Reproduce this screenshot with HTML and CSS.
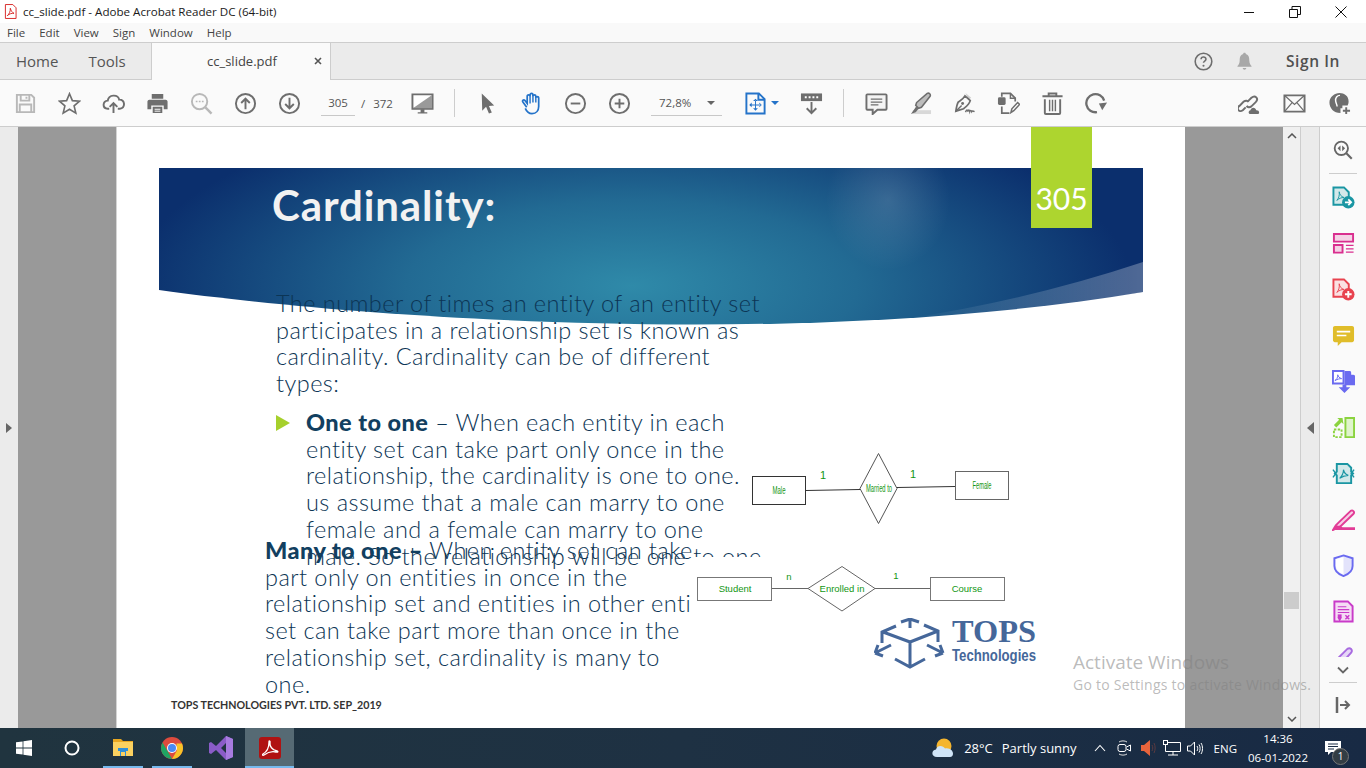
FILE: index.html
```html
<!DOCTYPE html>
<html>
<head>
  <meta charset="utf-8">
  <title>cc_slide.pdf - Adobe Acrobat Reader DC (64-bit)</title>
  <link rel="stylesheet" href="styles.css">
</head>
<body>
<div class="app">

  <!-- window title -->
  <div class="titlebar">
    <svg class="app-icon" viewBox="0 0 14 16"><path d="M1.5 .5h8l3.5 3.5v11.5h-11.5z" fill="#fff" stroke="#d6201f"/><path d="M3.5 12.5c2-1.500 3.500-4.500 3.300-8 .8 3 2 4.500 4 5.500-2.500-.3-5 .5-7.300 2.500z" fill="none" stroke="#d6201f"/></svg>
    <span class="title-text">cc_slide.pdf - Adobe Acrobat Reader DC (64-bit)</span>
    <div class="win-btns">
      <div class="win-btn"><svg width="12" height="12" viewBox="0 0 12 12"><path d="M1 6.500h10" stroke="#111"/></svg></div>
      <div class="win-btn"><svg width="12" height="12" viewBox="0 0 12 12"><path d="M.5 3.500h8v8h-8zM3 3.500v-3h8.500v8h-3" fill="none" stroke="#111"/></svg></div>
      <div class="win-btn"><svg width="12" height="12" viewBox="0 0 12 12"><path d="M.5 .5l11 11M11.500 .5l-11 11" stroke="#111"/></svg></div>
    </div>
  </div>

  <div class="menubar">
    <span>File</span><span>Edit</span><span>View</span><span>Sign</span><span>Window</span><span>Help</span>
  </div>

  <div class="tabbar">
    <div class="tab-links">
      <span>Home</span>
      <span>Tools</span>
    </div>
    <div class="doc-tab">
      <span>cc_slide.pdf</span>
      <svg class="tab-close" width="8" height="8" viewBox="0 0 8 8"><path d="M1 1l6 6M7 1l-6 6" stroke="#555" stroke-width="1.600"/></svg>
    </div>
    <div class="tab-right">
      <svg class="ico" viewBox="0 0 24 24"><circle cx="12" cy="12" r="9.500" fill="none" stroke="#6e6e6e" stroke-width="1.800"/><path d="M9.200 9.500c.2-3.500 5.800-3.300 5.600 0 0 2-2.800 2-2.800 4" fill="none" stroke="#6e6e6e" stroke-width="1.800"/><circle cx="12" cy="16.800" r="1.200" fill="#6e6e6e"/></svg>
      <svg class="ico bell" viewBox="0 0 24 24"><path d="M12 2c1 0 1.500.6 1.500 1.400 3.500 1 4 4 4 7.600 0 3 1.500 5 2.500 6v1H4v-1c1-1 2.500-3 2.500-6 0-3.600.5-6.600 4-7.600C10.500 2.600 11 2 12 2zM10 19.500h4c0 2.500-4 2.500-4 0z" fill="#a8a8a8"/></svg>
      <span class="sign-in">Sign In</span>
    </div>
  </div>

  <!-- main toolbar -->
  <div class="toolbar">
    <div class="tool"><svg class="ico" viewBox="0 0 24 24"><path d="M3 3h15l3 3v15H3z M7 3v6h9V3 M6 21v-8h12v8 M13 5v2" fill="none" stroke="#b8b8b8" stroke-width="2"/></svg></div>
    <div class="tool"><svg class="ico" viewBox="0 0 24 24"><path d="M12 1.800l3 7.200 7.500.6-5.700 4.900 1.800 7.500L12 18l-6.600 4 1.800-7.500L1.500 9.600 9 9z" fill="none" stroke="#6e6e6e" stroke-width="1.700"/></svg></div>
    <div class="tool"><svg class="ico" viewBox="0 0 24 24"><path d="M7.500 17.500H6c-6-.5-5.500-8 0-8.500 1-6.500 10.500-7 12-1 6-.5 7 8.500.5 9.500H16.500" fill="none" stroke="#6e6e6e" stroke-width="2"/><path d="M12 22v-10M8 15.500l4-4 4 4" fill="none" stroke="#6e6e6e" stroke-width="2"/></svg></div>
    <div class="tool"><svg class="ico" viewBox="0 0 24 24"><path d="M6 2h12v5H6zM3.500 8h17c1 0 2 1 2 2v8h-4v-4h-13v4h-4v-8c0-1 1-2 2-2zM7 15.500h10V22H7z" fill="#6e6e6e"/><path d="M9 18h6M9 20h6" stroke="#fff"/></svg></div>
    <div class="tool"><svg class="ico" viewBox="0 0 24 24"><circle cx="10" cy="10" r="8" fill="none" stroke="#b8b8b8" stroke-width="2"/><path d="M16 16l6.500 6.500" stroke="#b8b8b8" stroke-width="2.500"/><path d="M6 10h1.800M9.200 10H11M12.400 10h1.800" stroke="#b8b8b8" stroke-width="1.600"/></svg></div>
    <div class="tool"><svg class="ico" viewBox="0 0 24 24"><circle cx="12" cy="12" r="10" fill="none" stroke="#6e6e6e" stroke-width="2"/><path d="M12 18V7M7.500 11.500L12 7l4.500 4.500" fill="none" stroke="#6e6e6e" stroke-width="2"/></svg></div>
    <div class="tool"><svg class="ico" viewBox="0 0 24 24"><circle cx="12" cy="12" r="10" fill="none" stroke="#6e6e6e" stroke-width="2"/><path d="M12 6v11M7.500 12.500L12 17l4.500-4.500" fill="none" stroke="#6e6e6e" stroke-width="2"/></svg></div>
    <div class="page-nav"><span class="page-input">305</span><span class="page-slash">/</span><span>372</span></div>
    <div class="tool"><svg class="ico" viewBox="0 0 24 24"><path d="M1.500 2.500h21v15h-21z" fill="#fff" stroke="#6e6e6e" stroke-width="2"/><path d="M2 17L22 3v14z" fill="#9a9a9a"/><path d="M7 21h10v1.500H7zM10 18h4v3h-4z" fill="#6e6e6e"/></svg></div>
    <div class="sep first-sep"></div>
    <div class="tool"><svg class="ico" viewBox="0 0 24 24"><path d="M6 1.500l13 12.500-5.500.5 3 7-3 1-3-7L6.500 19.500z" fill="#6e6e6e"/></svg></div>
    <div class="tool"><svg class="ico" viewBox="0 0 24 24"><path d="M7 16L3 10.500c-1.200-1.500.8-3 2-1.800L7.500 12V4.500c0-2 3-2 3 0V3c0-2 3-2 3 0v1.500c0-2 3-2 3 0V6c0-1.500 3-1.500 3 0v9c0 4-2.500 7.500-7 7.500-4 0-5.500-2-7-5.500" fill="none" stroke="#2473c9" stroke-width="1.800"/><path d="M10.500 4v8M13.500 3v8M16.500 4.500V11" stroke="#2473c9" stroke-width="1.500"/></svg></div>
    <div class="tool"><svg class="ico" viewBox="0 0 24 24"><circle cx="12" cy="12" r="10" fill="none" stroke="#6e6e6e" stroke-width="2"/><path d="M7 12h10" stroke="#6e6e6e" stroke-width="2"/></svg></div>
    <div class="tool"><svg class="ico" viewBox="0 0 24 24"><circle cx="12" cy="12" r="10" fill="none" stroke="#6e6e6e" stroke-width="2"/><path d="M7 12h10M12 7v10" stroke="#6e6e6e" stroke-width="2"/></svg></div>
    <div class="zoom-box"><span>72,8%</span><i class="caret"></i></div>
    <div class="tool fit-tool">
      <svg class="ico" viewBox="0 0 24 24"><path d="M2.500 1.500h13l6 6v15h-19z M15 1.500v6.500h6.500" fill="none" stroke="#2473c9" stroke-width="2"/><path d="M12 7l-2.500 2.500h5zM12 19.500L9.500 17h5zM5.500 13.500L8 11v5zM18.500 13.500L16 11v5zM11.500 9h1v9h-1zM7 13h10v1H7z" fill="#2473c9"/></svg>
      <i class="caret blue"></i>
    </div>
    <div class="tool"><svg class="ico" viewBox="0 0 24 24"><path d="M1 1.500h22v8H1z" fill="#6e6e6e"/><path d="M5 5.500h2M9 5.500h2M13 5.500h2M17 5.500h2" stroke="#fff" stroke-width="2"/><path d="M12 10.500v11M7 17l5 5 5-5" fill="none" stroke="#6e6e6e" stroke-width="2"/></svg></div>
    <div class="sep second-sep"></div>
    <div class="tool"><svg class="ico" viewBox="0 0 24 24"><path d="M2.500 2.500h19c.5 0 1 .5 1 1v14c0 .5-.5 1-1 1H13l-5 4.500v-4.500H2.500c-.5 0-1-.5-1-1v-14c0-.5.500-1 1-1z" fill="#f4f4f4" stroke="#6e6e6e" stroke-width="2"/><path d="M6 7.500h12M6 10.500h12M6 13.500h8" stroke="#6e6e6e" stroke-width="1.300"/></svg></div>
    <div class="tool"><svg class="ico" viewBox="0 0 24 24"><path d="M4 19h19v4H4z" fill="#d8d8d8"/><path d="M8 11L19 1.500c2-1 4 1 3 3L13 16l-3 1-3-3z" fill="#bdbdbd" stroke="#6e6e6e" stroke-width="1.600"/><path d="M7.500 15l2.500 2.500L7 21l-5 2z" fill="#6e6e6e"/></svg></div>
    <div class="tool"><svg class="ico" viewBox="0 0 24 24"><path d="M13 1l6 5-3 2z" fill="#cfcfcf"/><path d="M12.500 4l5.500 5c-1 4-4 6-7 8.500L3 20c.5-3.500 1-7 2.500-9.500 2-1.500 5-3 7-6.500z" fill="none" stroke="#6e6e6e" stroke-width="1.800"/><path d="M3 20l6-6" stroke="#6e6e6e" stroke-width="1.500"/><circle cx="10" cy="12" r="1.500" fill="#6e6e6e"/><path d="M13 21c1.500-3 2-2.500 2.500-.5.500-2.500 1.500-2.500 2 0 .5-1.500 1.500-1.500 2 0 .5-1 1-1 3 0" fill="none" stroke="#6e6e6e" stroke-width="1.500"/></svg></div>
    <div class="tool"><svg class="ico" viewBox="0 0 24 24"><path d="M5 5V1.500h9l5 5V10M5 15v7h8" fill="none" stroke="#6e6e6e" stroke-width="1.800"/><rect x="1" y="5.500" width="8" height="8" rx="1.500" fill="#6e6e6e"/><path d="M14 1.500v5h5" fill="none" stroke="#6e6e6e" stroke-width="1.500"/><path d="M14.500 21.500l1-4 6-6.500 2 2-6 6.500z" fill="#fff" stroke="#6e6e6e" stroke-width="1.600"/></svg></div>
    <div class="tool"><svg class="ico" viewBox="0 0 24 24"><path d="M1.500 4.500h21M8 4.500V1.500h8v3M4 7.500V22c0 .5.500 1 1 1h14c.5 0 1-.5 1-1V7.500" fill="none" stroke="#6e6e6e" stroke-width="2"/><path d="M9 8v12M12 8v12M15 8v12" stroke="#6e6e6e" stroke-width="1.500"/></svg></div>
    <div class="tool"><svg class="ico" viewBox="0 0 24 24"><path d="M12.500 21A9.500 9.500 0 1 1 20 9" fill="none" stroke="#6e6e6e" stroke-width="2.400"/><path d="M23 11l-5 8-3.500-7z" fill="#6e6e6e"/></svg></div>
    <div class="tool-right">
      <div class="tool"><svg class="ico" viewBox="0 0 24 24"><path d="M8 16L5 19c-4 3-7-2-3.500-4.500L6 10c2-1.500 4-1 5 .5M11 9l3-3c4-3.500 8 1 4.500 4.500L14 15c-2 1.500-4 1-5-.5" fill="none" stroke="#6e6e6e" stroke-width="2"/><path d="M13 23c-2.500 0-2.500-3.500 0-4 .5-3.500 5.500-3.500 6 0 3.500-.5 4 4 1.500 4z" fill="#6e6e6e"/></svg></div>
      <div class="tool"><svg class="ico" viewBox="0 0 24 24"><path d="M1.500 3.500h21v17h-21z" fill="none" stroke="#6e6e6e" stroke-width="2"/><path d="M2 4l10 9 10-9M2 20l7.500-9M22 20l-7.500-9" fill="none" stroke="#6e6e6e" stroke-width="1.300"/></svg></div>
      <div class="tool"><svg class="ico" viewBox="0 0 24 24"><path d="M12 1c5 0 9.500 3 9.500 9 0 2-.5 3-1 4h-5.500v3h-2v5c-7 0-11.500-5-11.500-11S7 1 12 1z" fill="#6e6e6e"/><path d="M12.500 3.500c-3 0-5 2.500-4.500 6 .3 2 1.500 4 1.500 5.500" fill="none" stroke="#fff" stroke-width="1.500"/><path d="M19 16v7M15.500 19.500h7.500" stroke="#6e6e6e" stroke-width="2"/></svg></div>
    </div>
  </div>

  <div class="main">
    <div class="side-pane"><i class="arrow-right"></i></div>

    <div class="viewer">
      <div class="pdf-page">

        <!-- slide banner -->
        <svg class="banner" width="984" height="160" viewBox="0 0 984 160">
          <defs>
            <radialGradient id="bannerGrad" gradientUnits="userSpaceOnUse" cx="0" cy="0" r="1" gradientTransform="translate(473 118) scale(500 190)">
              <stop offset="0" stop-color="#2f8aa9"/>
              <stop offset=".45" stop-color="#226a93"/>
              <stop offset="1" stop-color="#0b2f6d"/>
            </radialGradient>
            <radialGradient id="spot">
              <stop offset="0" stop-color="#fff" stop-opacity=".14"/>
              <stop offset="1" stop-color="#fff" stop-opacity="0"/>
            </radialGradient>
            <linearGradient id="swoosh" x1="0" x2="1" y1="0" y2="0">
              <stop offset="0" stop-color="#fff" stop-opacity="0"/>
              <stop offset="1" stop-color="#fff" stop-opacity=".28"/>
            </linearGradient>
          </defs>
          <path d="M0 0H984V124C640 182 200 150 0 122Z" fill="url(#bannerGrad)"/>
          <ellipse cx="729" cy="32" rx="62" ry="70" fill="url(#spot)"/>
          <path d="M984 94Q870 132 745 151 880 145 984 124Z" fill="url(#swoosh)"/>
        </svg>

        <div class="slide-badge">305</div>
        <h1 class="slide-title">Cardinality:</h1>

        <div class="slide-text intro">
          <div>The number of times an entity of an entity set</div>
          <div>participates in a relationship set is known as</div>
          <div>cardinality. Cardinality can be of different</div>
          <div>types:</div>
        </div>

        <div class="slide-text one-one">
          <svg class="bullet" width="14" height="16" viewBox="0 0 14 16"><path d="M0 0l14 8L0 16z" fill="#a6d02c"/></svg>
          <div><b>One to one</b> – When each entity in each</div>
          <div>entity set can take part only once in the</div>
          <div>relationship, the cardinality is one to one.</div>
          <div>us assume that a male can marry to one</div>
          <div>female and a female can marry to one</div>
          <div>male. So the relationship will be one to one</div>
        </div>

        <!-- diagram 1 -->
        <svg class="diagram first" width="258" height="76" viewBox="0 0 258 76">
          <rect width="258" height="76" fill="#fff"/>
          <rect x=".5" y="26.500" width="53" height="28" fill="#fff" stroke="#333"/>
          <rect x="203.500" y="21.500" width="53" height="28" fill="#fff" stroke="#666"/>
          <path d="M54 40.500l54-1M145 37.500l58-1" stroke="#333"/>
          <path d="M126.500 3.500L145 38.500 126.500 73.500 108 38.500z" fill="#fff" stroke="#555"/>
          <g class="dia-text narrow">
            <text x="27" y="44" text-anchor="middle" textLength="13" lengthAdjust="spacingAndGlyphs">Male</text>
            <text x="127" y="42" text-anchor="middle" textLength="26" lengthAdjust="spacingAndGlyphs">Married to</text>
            <text x="230" y="39" text-anchor="middle" textLength="19" lengthAdjust="spacingAndGlyphs">Female</text>
            <text x="71" y="29" text-anchor="middle">1</text>
            <text x="161" y="28" text-anchor="middle">1</text>
          </g>
        </svg>

        <!-- diagram 2 -->
        <svg class="diagram second" width="320" height="58" viewBox="0 0 320 58">
          <rect width="320" height="58" fill="#fff"/>
          <rect x="2.500" y="20.500" width="74" height="23" fill="#fff" stroke="#777"/>
          <rect x="235.500" y="20.500" width="74" height="23" fill="#fff" stroke="#777"/>
          <path d="M77 31.500h36M180 31.500h55" stroke="#666"/>
          <path d="M147 9.500L180 31.500 147 54 113 31.500z" fill="#fff" stroke="#666"/>
          <g class="dia-text">
            <text x="40" y="35" text-anchor="middle">Student</text>
            <text x="147" y="35" text-anchor="middle">Enrolled in</text>
            <text x="272" y="35" text-anchor="middle">Course</text>
            <text x="94" y="23" text-anchor="middle">n</text>
            <text x="201" y="22" text-anchor="middle">1</text>
          </g>
        </svg>

        <div class="slide-text many-one">
          <div><b>Many to one</b> <b class="dash">–</b> When entity set can take</div>
          <div>part only on entities in once in the</div>
          <div>relationship set and entities in other enti</div>
          <div>set can take part more than once in the</div>
          <div>relationship set, cardinality is many to</div>
          <div>one.</div>
        </div>

        <!-- company logo -->
        <svg class="logo" width="190" height="52" viewBox="0 0 190 52">
          <g fill="none" stroke="#45679a" stroke-width="3">
            <path d="M36 24L9 14M36 24l28-11M36 24v25M8 25V14l14-6M64 24V13l-14-6M27 4l9-3 9 3M36 1v9M1 35l16-8M1 35l8 3M1 35l3-8M69 35L53 27M69 35l-8 3M69 35l-3-8M21 41l15 8 15-8"/>
          </g>
          <text class="logo-tops" x="78" y="24" textLength="84" lengthAdjust="spacingAndGlyphs">TOPS</text>
          <text class="logo-tech" x="78" y="43" textLength="84" lengthAdjust="spacingAndGlyphs">Technologies</text>
        </svg>

        <div class="slide-footer">TOPS TECHNOLOGIES PVT. LTD. SEP_2019</div>
      </div>
    </div>

    <div class="scrollbar">
      <svg width="10" height="6" viewBox="0 0 10 6"><path d="M1 5l4-4 4 4" fill="none" stroke="#555" stroke-width="1.500"/></svg>
      <div class="scroll-track"><div class="scroll-thumb"></div></div>
      <svg width="10" height="6" viewBox="0 0 10 6"><path d="M1 1l4 4 4-4" fill="none" stroke="#555" stroke-width="1.500"/></svg>
    </div>
    <div class="side-pane right-handle"><i class="arrow-left"></i></div>

    <!-- right tools panel -->
    <div class="tools-panel">
      <div class="panel-search">
        <svg class="ico" viewBox="0 0 24 24"><circle cx="10" cy="10" r="8" fill="none" stroke="#666" stroke-width="2.200"/><path d="M16 16l6.500 6.500" stroke="#666" stroke-width="2.600"/><path d="M9 6.500L5.500 10 9 13.500zM11 6.500l3.500 3.500-3.500 3.500z" fill="#666"/></svg>
      </div>
      <div class="panel-list">
        <div class="panel-item"><svg class="ico" viewBox="0 0 24 24"><path d="M1.500 1.500h11l5 5v13h-16z" fill="#d3e9ea" stroke="#1a96a3" stroke-width="2"/><path d="M5 15c2-2 3-5 2.500-9 .5 3 2 5 5 6-3 0-5 1-7.500 3z" fill="none" stroke="#1a96a3"/><circle cx="17" cy="17" r="6.500" fill="#1a96a3"/><path d="M13.500 17h6M17 14l3 3-3 3" fill="none" stroke="#fff" stroke-width="1.800"/></svg></div>
        <div class="panel-item"><svg class="ico" viewBox="0 0 24 24"><path d="M2 2h20v8H2z" fill="#f4d3e6" stroke="#d92f8f" stroke-width="2"/><path d="M2 13.500h9v8H2z" fill="#f4d3e6" stroke="#d92f8f" stroke-width="2"/><path d="M14.500 14h8M14.500 17.500h8M14.500 21h8" stroke="#d92f8f" stroke-width="1.300"/></svg></div>
        <div class="panel-item"><svg class="ico" viewBox="0 0 24 24"><path d="M1.500 1.500h11l5 5v13h-16z" fill="#fbe0e2" stroke="#e8434f" stroke-width="2"/><path d="M5 15c2-2 3-5 2.500-9 .5 3 2 5 5 6-3 0-5 1-7.500 3z" fill="none" stroke="#e8434f"/><circle cx="17" cy="17" r="6.500" fill="#e8434f"/><path d="M13.500 17h7M17 13.500v7" stroke="#fff" stroke-width="2"/></svg></div>
        <div class="panel-item"><svg class="ico" viewBox="0 0 24 24"><path d="M3 2h18c1 0 2 1 2 2v13c0 1-1 2-2 2H10l-4 4v-4H3c-1 0-2-1-2-2V4c0-1 1-2 2-2z" fill="#e0bd2a"/><path d="M5 8h14M5 12h10" stroke="#fff" stroke-width="1.800"/></svg></div>
        <div class="panel-item"><svg class="ico" viewBox="0 0 24 24"><path d="M1 1h11v13H1z" fill="#fff" stroke="#6a6af0" stroke-width="2"/><path d="M3 11c2-1 3-3 3-6 .5 2 1.500 3 4 4-2 0-4 .5-7 2z" fill="none" stroke="#6a6af0"/><path d="M13 1h6l5 5v10H13z" fill="#6a6af0"/><path d="M20 1l4 4h-4z" fill="#fff"/><path d="M11 15v3H7l6 6 6-6h-4v-3z" fill="#6a6af0"/></svg></div>
        <div class="panel-item"><svg class="ico" viewBox="0 0 24 24"><path d="M14 2h9v20h-9z" fill="#dff4cc" stroke="#8bd33f" stroke-width="2"/><path d="M2 14h8v8H2z" fill="none" stroke="#8bd33f" stroke-width="2" stroke-dasharray="2.500 1.500"/><path d="M11 2H5.500L7.500 4 2 9.500 4.500 12 10 6.500 12 8.500z" fill="#8bd33f"/></svg></div>
        <div class="panel-item"><svg class="ico" viewBox="0 0 24 24"><path d="M5 2h11l4 4v4l2 2-2 2v8H5v-8l-2-2 2-2z" fill="#d3e9ea" stroke="#1a96a3" stroke-width="2"/><path d="M8 17c2-2 4-5 4-9 .5 3 2 5 5 6-3 0-6 1-9 3z" fill="none" stroke="#1a96a3" stroke-width="1.200"/><path d="M1 8l3 4-3 4M23 8l-3 4 3 4" fill="none" stroke="#1a96a3" stroke-width="1.500"/></svg></div>
        <div class="panel-item"><svg class="ico" viewBox="0 0 24 24"><path d="M1 23l3-5 2-2L19.500 3c2-1.500 4.500 1 3 3L9 19z" fill="#f7cfe6" stroke="#e23c96" stroke-width="2"/><path d="M1 23l3-5 5 1 2 1h13v3z" fill="#e23c96"/></svg></div>
        <div class="panel-item"><svg class="ico" viewBox="0 0 24 24"><path d="M12 1.500l9.500 3v8c0 5-4 8.500-9.500 10.500-5.500-2-9.500-5.500-9.500-10.500v-8z" fill="#e3e3fb" stroke="#6a6af0" stroke-width="2"/><path d="M12 3v18.500c-4.500-2-8-5-8-9.500V5.500z" fill="#fff"/></svg></div>
        <div class="panel-item"><svg class="ico" viewBox="0 0 24 24"><path d="M2.500 1.500h14l5 5v16h-19z" fill="#f5dbf5" stroke="#c93bc9" stroke-width="2"/><path d="M6 7h9M6 10h12M6 13h12" stroke="#c93bc9" stroke-width="1.200"/><rect x="6" y="15" width="4" height="4" fill="#c93bc9"/><path d="M7 19h2l-1 2zM14 16l4 4M18 16l-4 4" stroke="#c93bc9" stroke-width="1.500"/></svg></div>
        <div class="panel-item"><svg class="ico" viewBox="0 0 24 24"><path d="M2 20l2-5 12-12c3-2 6 1 4 4L9 19z" fill="#e6d6f7" stroke="#a86be0" stroke-width="2"/></svg></div>
      </div>
      <svg class="panel-more" width="12" height="8" viewBox="0 0 12 8"><path d="M1 1.500l5 5 5-5" fill="none" stroke="#666" stroke-width="1.800"/></svg>
      <div class="panel-exit">
        <svg width="16" height="16" viewBox="0 0 16 16"><path d="M2 0v16" stroke="#666" stroke-width="2.500"/><path d="M5 8h9M10 4l4 4-4 4" fill="none" stroke="#666" stroke-width="2"/></svg>
      </div>
    </div>

    <div class="activate">
      <div class="activate-big">Activate Windows</div>
      <div class="activate-small">Go to Settings to activate Windows.</div>
    </div>
  </div>

  <!-- windows taskbar -->
  <div class="taskbar">
    <div class="task-btn small"><svg width="16" height="16" viewBox="0 0 16 16"><path d="M0 2.300l6.600-.9v6.200H0zM7.400 1.300L16 0v7.600H7.400zM0 8.400h6.600v6.200L0 13.700zM7.400 8.400H16V16l-8.600-1.300z" fill="#fff"/></svg></div>
    <div class="task-btn small"><svg width="16" height="16" viewBox="0 0 16 16"><circle cx="8" cy="8" r="6.500" fill="none" stroke="#fff" stroke-width="2"/></svg></div>
    <div class="task-btn open first-app"><svg width="22" height="20" viewBox="0 0 22 20"><path d="M1 1h8l2 2h10v15H1z" fill="#e8a721"/><path d="M1 4h20v14H1z" fill="#fad160"/><path d="M8 12h6v6H8zM6 10h10v3H6z" fill="#2f8fd8"/><path d="M9 14h4v4H9z" fill="#fad160"/></svg></div>
    <div class="task-btn open"><svg width="22" height="22" viewBox="0 0 22 22"><circle cx="11" cy="11" r="11" fill="#dd4b3e"/><path d="M11 22A11 11 0 0 1 1.500 5.500L6.500 14 11 22z" fill="#1fa463"/><path d="M22 11a11 11 0 0 1-11 11l5-8.500-.5-7H21c.6 1.400 1 3 1 4.500z" fill="#f7c328"/><circle cx="11" cy="11" r="5" fill="#fff"/><circle cx="11" cy="11" r="4" fill="#4a8af4"/></svg></div>
    <div class="task-btn"><svg width="24" height="24" viewBox="0 0 24 24"><path d="M17 0l7 3v18l-7 3-10-10-5 4-2-1V7l2-1 5 4zM17 7l-5 5 5 5z" fill="#8a5cc8"/><path d="M17 0l7 3v18l-7 3z" fill="#a77be0"/></svg></div>
    <div class="task-btn open active"><svg width="22" height="22" viewBox="0 0 22 22"><rect width="22" height="22" rx="3" fill="#b01212"/><path d="M4 17c3.500-2 6-6.500 6-12 0-2 1.500-1 1 1-.5 3 2 7 7 8 1.500 .3 1 1.500-1 1-4-1-8 0-12 3-1 .7-2 0-1-1z" fill="none" stroke="#fff" stroke-width="1.300"/></svg></div>

    <div class="tray">
      <svg class="weather" width="22" height="20" viewBox="0 0 22 20"><circle cx="12" cy="8" r="7.500" fill="#f5b52e"/><path d="M5 19c-6 0-6-7-1-7.500C5 7 11 7 13 10.500c5-1 8 2.500 8 5 0 2-1 3.500-3 3.500z" fill="#cfe4f7"/></svg>
      <span class="tray-temp">28°C</span>
      <span class="tray-cond">Partly sunny</span>
      <svg class="tray-chevron" width="12" height="8" viewBox="0 0 12 8"><path d="M1 7l5-5.500L11 7" fill="none" stroke="#fff" stroke-width="1.100"/></svg>
      <svg class="tray-meet" width="14" height="16" viewBox="0 0 14 16"><path d="M2 2c2-1.500 6-1.500 8 0M2 14c2 1.500 6 1.500 8 0" fill="none" stroke="#ddd"/><rect x="1" y="4.500" width="8" height="7" rx="2" fill="none" stroke="#fff"/><path d="M9.500 7l4-2v6l-4-2" fill="none" stroke="#fff"/></svg>
      <svg class="tray-speaker" width="16" height="16" viewBox="0 0 16 16"><path d="M0 5h3l6-5v16l-6-5H0z" fill="#e8643c"/><path d="M11 5c1 2 1 4 0 6M13 3c1.500 3 1.500 7 0 10" fill="none" stroke="#5a3a40"/></svg>
      <svg class="tray-net" width="18" height="16" viewBox="0 0 18 16"><path d="M2.500 2.500h15v9h-15zM10 11.500V15M5 15h10" fill="none" stroke="#fff"/><rect x=".5" y=".5" width="4" height="4" fill="#1b2c44" stroke="#fff"/></svg>
      <svg class="tray-vol" width="17" height="15" viewBox="0 0 17 15"><path d="M.5 5h3l4-4v13l-4-4h-3z" fill="none" stroke="#fff"/><path d="M10 5c1 1.500 1 3.500 0 5M12 3.500c1.500 2.500 1.500 5.500 0 8M14 2c2 3 2 8 0 11" fill="none" stroke="#fff"/></svg>
      <span class="tray-lang">ENG</span>
      <div class="clock"><div>14:36</div><div>06-01-2022</div></div>
      <div class="notify">
        <svg width="16" height="14" viewBox="0 0 16 14"><path d="M0 0h16v11H6l-3 3v-3H0z" fill="#fff"/><path d="M3 3h10M3 5.500h10M3 8h6" stroke="#1b2c44"/></svg>
        <span class="notify-count">1</span>
      </div>
    </div>
  </div>
</div>
</body>
</html>
```

FILE: styles.css
```css
html, body {
  margin: 0;
  padding: 0;
  height: 100%;
  overflow: hidden;
}
.app {
  position: relative;
  width: 1366px;
  height: 768px;
  display: flex;
  flex-direction: column;
  font-family: "Open Sans", sans-serif;
  color: #444;
  overflow: hidden;
}
.ico {
  width: 24px;
  height: 24px;
  display: block;
}

/* title + menu */
.titlebar {
  height: 23px;
  background: #fff;
  display: flex;
  align-items: center;
  font-family: "Open Sans", sans-serif;
  font-size: 11.600px;
  color: #1a1a1a;
  flex: none;
}
.app-icon {
  width: 13px;
  height: 15px;
  margin: 0 6px 0 4px;
}
.win-btns {
  margin-left: auto;
  margin-right: 2px;
  display: flex;
}
.win-btn {
  width: 46px;
  display: flex;
  justify-content: center;
}
.menubar {
  height: 20px;
  background: #f9f9f9;
  display: flex;
  align-items: center;
  gap: 14px;
  padding-left: 7px;
  font-size: 11.500px;
  color: #444;
  border-bottom: 1px solid #cdcdcd;
  box-sizing: border-box;
  flex: none;
}

/* tabs */
.tabbar {
  height: 37px;
  background: #ebebeb;
  display: flex;
  align-items: center;
  font-size: 15px;
  color: #555;
  border-bottom: 1px solid #cdcdcd;
  box-sizing: border-box;
  flex: none;
}
.tab-links {
  width: 151px;
  padding-left: 16px;
  box-sizing: border-box;
  display: flex;
  gap: 30px;
  flex: none;
}
.doc-tab {
  width: 180px;
  height: 37px;
  background: #fafafa;
  border-left: 1px solid #cdcdcd;
  border-right: 1px solid #cdcdcd;
  box-sizing: border-box;
  display: flex;
  align-items: center;
  padding-left: 55px;
  font-size: 13px;
  color: #444;
  flex: none;
}
.tab-close {
  margin-left: auto;
  margin-right: 8px;
}
.tab-right {
  margin-left: auto;
  display: flex;
  align-items: center;
  padding-right: 26px;
}
.tab-right .ico {
  width: 21px;
  height: 21px;
}
.bell {
  margin-left: 20px;
}
.sign-in {
  margin-left: 31px;
  font-weight: 600;
  font-size: 15.500px;
  letter-spacing: .6px;
  color: #505050;
}

/* toolbar */
.toolbar {
  height: 47px;
  background: #fafafa;
  display: flex;
  align-items: center;
  padding-left: 3px;
  border-bottom: 1px solid #cdcdcd;
  box-sizing: border-box;
  flex: none;
}
.tool {
  width: 44px;
  height: 44px;
  display: flex;
  align-items: center;
  justify-content: center;
  flex: none;
}
.tool .ico {
  width: 23px;
  height: 23px;
}
.page-nav {
  width: 89px;
  display: flex;
  align-items: center;
  font-size: 11.500px;
  color: #555;
  flex: none;
}
.page-input {
  width: 34px;
  margin-left: 10px;
  height: 25px;
  line-height: 25px;
  text-align: center;
  border-bottom: 1px solid #c8c8c8;
}
.page-slash {
  margin: 0 8px 0 6px;
}
.sep {
  width: 1px;
  height: 28px;
  background: #cdcdcd;
  flex: none;
}
.first-sep,
.second-sep {
  margin: 0 10px;
}
.zoom-box {
  width: 71px;
  height: 25px;
  margin: 0 11px 0 10px;
  border-bottom: 1px solid #c8c8c8;
  display: flex;
  align-items: center;
  padding-left: 8px;
  box-sizing: border-box;
  font-size: 11.500px;
  color: #555;
  flex: none;
}
.caret {
  display: inline-block;
  margin-left: auto;
  margin-right: 7px;
  border-left: 4px solid transparent;
  border-right: 4px solid transparent;
  border-top: 4px solid #666;
}
.caret.blue {
  margin: 0 0 0 4px;
  border-top-color: #2473c9;
}
.fit-tool {
  justify-content: flex-start;
  padding-left: 11px;
  box-sizing: border-box;
  margin-right: 12px;
}
.fit-tool .ico {
  flex: none;
}
.tool-right {
  margin-left: auto;
  display: flex;
  margin-right: 5px;
  gap: 1px;
}

/* main area */
.main {
  position: relative;
  flex: 1;
  display: flex;
  min-height: 0;
}
.side-pane {
  width: 18px;
  background: #ebebeb;
  display: flex;
  align-items: center;
  justify-content: center;
  flex: none;
}
.arrow-right {
  border-top: 5px solid transparent;
  border-bottom: 5px solid transparent;
  border-left: 6px solid #666;
}
.arrow-left {
  border-top: 6px solid transparent;
  border-bottom: 6px solid transparent;
  border-right: 7px solid #666;
}
.viewer {
  flex: 1;
  background: #999;
  padding-left: 98px;
  min-width: 0;
}
.pdf-page {
  position: relative;
  width: 1069px;
  height: 100%;
  background: #fff;
  border-left: 1px solid #d4d4d4;
  box-sizing: border-box;
  overflow: hidden;
}
.banner {
  position: absolute;
  left: 42px;
  top: 41px;
}
.slide-badge {
  position: absolute;
  left: 914px;
  top: 0;
  width: 61px;
  height: 101px;
  background: #add52f;
  color: #fff;
  font-family: "Lato", sans-serif;
  font-size: 30px;
  line-height: 142px;
  text-align: center;
}
.slide-title {
  position: absolute;
  left: 155px;
  top: 53px;
  margin: 0;
  font-family: "Lato", sans-serif;
  font-size: 42px;
  line-height: 50px;
  font-weight: 700;
  letter-spacing: .9px;
  color: #f2f2f2;
  white-space: nowrap;
}
.slide-text {
  position: absolute;
  font-family: "Lato", sans-serif;
  font-size: 23.500px;
  font-weight: 300;
  letter-spacing: .45px;
  line-height: 26.700px;
  color: #0c3555;
  white-space: nowrap;
}
.slide-text b {
  color: #123f60;
  font-weight: 900;
}
.intro {
  left: 159px;
  top: 163px;
}
.one-one {
  left: 189px;
  top: 282px;
}
.bullet {
  position: absolute;
  left: -30px;
  top: 6px;
}
.many-one {
  left: 148px;
  top: 410px;
}
.diagram {
  position: absolute;
}
.diagram.first {
  left: 635px;
  top: 323px;
}
.diagram.second {
  left: 578px;
  top: 430px;
}
.dia-text {
  font-family: "Liberation Sans", sans-serif;
  font-size: 9.500px;
  fill: #129612;
}
.dia-text.narrow {
  font-size: 11px;
}
.logo {
  position: absolute;
  left: 757px;
  top: 491px;
}
.logo-tops {
  font-family: "Liberation Serif", serif;
  font-weight: 700;
  font-size: 32px;
  fill: #45679a;
}
.logo-tech {
  font-family: "Liberation Sans", sans-serif;
  font-weight: 700;
  font-size: 17px;
  fill: #45679a;
}
.slide-footer {
  position: absolute;
  left: 54px;
  top: 571px;
  font-family: "Lato", sans-serif;
  font-size: 10.700px;
  font-weight: 700;
  color: #333;
  white-space: nowrap;
}

/* scrollbar + right panel */
.scrollbar {
  width: 17px;
  background: #f0f0f0;
  border-right: 1px solid #cdcdcd;
  box-sizing: content-box;
  display: flex;
  flex-direction: column;
  align-items: center;
  padding: 6px 0;
  flex: none;
}
.scroll-track {
  flex: 1;
  width: 100%;
  position: relative;
}
.scroll-thumb {
  position: absolute;
  left: 1px;
  top: 453px;
  width: 15px;
  height: 17px;
  background: #ccc;
}
.right-handle {
  border-right: 1px solid #cdcdcd;
}
.tools-panel {
  width: 46px;
  background: #fafafa;
  display: flex;
  flex-direction: column;
  align-items: center;
  flex: none;
}
.panel-search {
  height: 46px;
  width: 28px;
  display: flex;
  align-items: center;
  justify-content: center;
  border-bottom: 1px solid #cdcdcd;
  flex: none;
}
.panel-search .ico {
  width: 20px;
  height: 20px;
}
.panel-list {
  height: 483px;
  overflow: hidden;
  flex: none;
}
.panel-item {
  height: 46px;
  display: flex;
  align-items: center;
  justify-content: center;
}
.panel-item .ico {
  width: 23px;
  height: 23px;
}
.panel-more {
  margin-top: 9px;
  flex: none;
}
.panel-exit {
  margin-top: 8px;
  width: 28px;
  border-top: 1px solid #cdcdcd;
  padding-top: 14px;
  display: flex;
  justify-content: center;
  flex: none;
}

/* windows watermark */
.activate {
  position: absolute;
  left: 1073px;
  top: 523px;
  color: rgba(130, 130, 130, 0.55);
  font-family: "Open Sans", sans-serif;
  white-space: nowrap;
  pointer-events: none;
}
.activate-big {
  font-size: 19px;
  line-height: 24px;
}
.activate-small {
  font-size: 14px;
  letter-spacing: .25px;
  line-height: 22px;
}

/* taskbar */
.taskbar {
  height: 40px;
  background: linear-gradient(90deg, #20343f, #1e3143 50%, #182a44);
  display: flex;
  align-items: center;
  color: #fff;
  flex: none;
}
.task-btn {
  width: 49px;
  height: 40px;
  display: flex;
  align-items: center;
  justify-content: center;
  box-sizing: border-box;
  flex: none;
}
.task-btn.small {
  width: 48px;
}
.task-btn.first-app {
  margin-left: 2px;
}
.task-btn.open {
  background: linear-gradient(#76b9ed, #76b9ed) center bottom / 40px 2px no-repeat;
}
.task-btn.active {
  background: #566a74 linear-gradient(#76b9ed, #76b9ed) center bottom / 100% 2px no-repeat;
}
.tray {
  margin-left: auto;
  display: flex;
  align-items: center;
  font-size: 13px;
  height: 40px;
}
.tray-temp {
  margin-left: 10px;
}
.tray-cond {
  margin-left: 9px;
}
.tray-chevron {
  margin-left: 17px;
}
.tray-meet {
  margin-left: 11px;
}
.tray-speaker {
  margin-left: 10px;
}
.tray-net {
  margin-left: 6px;
}
.tray-vol {
  margin-left: 6px;
}
.tray-lang {
  margin-left: 10px;
  font-size: 11.500px;
}
.clock {
  width: 68px;
  margin-left: 7px;
  text-align: center;
  font-size: 11.500px;
  line-height: 19px;
}
.notify {
  position: relative;
  width: 32px;
  margin-right: 22px;
  padding-left: 13px;
  box-sizing: border-box;
}
.notify svg {
  display: block;
}
.notify-count {
  position: absolute;
  left: 20px;
  top: 7px;
  width: 15px;
  height: 15px;
  line-height: 15px;
  border-radius: 50%;
  background: #333d44;
  border: 1px solid #777;
  text-align: center;
  font-size: 10px;
}
```
